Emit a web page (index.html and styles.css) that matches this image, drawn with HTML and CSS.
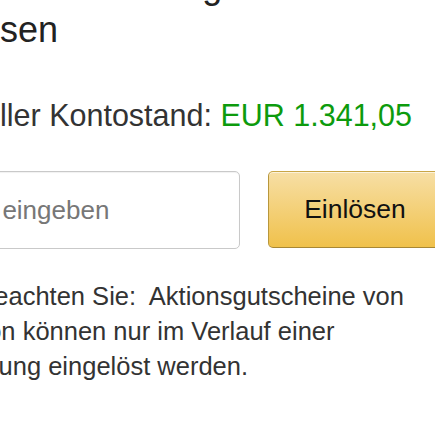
FILE: index.html
```html
<!DOCTYPE html>
<html lang="de">
<head>
    <meta charset="UTF-8">
    <meta name="viewport" content="width=device-width, initial-scale=1.0">
    <title>Gutschein einlösen</title>
    <link rel="stylesheet" href="styles.css">
</head>
<body>
    <div class="redeem-page">
        <h1 class="redeem-title">Neuen Geschenkgutschein einlösen</h1>

        <p class="balance">
            Aktueller Kontostand: <span class="balance-amount">EUR 1.341,05</span>
        </p>

        <form class="redeem-form">
            <input type="text" class="code-input" placeholder="Code eingeben">
            <button type="button" class="redeem-button">Einlösen</button>
        </form>

        <p class="redeem-note">
            Bitte beachten Sie:&nbsp; Aktionsgutscheine von Amazon können nur im Verlauf einer Bestellung eingelöst werden.
        </p>
    </div>
</body>
</html>
```

FILE: styles.css
```css
body {
    margin: 0;
    background-color: #ffffff;
    color: #333;
    font-family: "Liberation Sans", Arial, Helvetica, sans-serif;
    overflow: hidden;
}

/* page is scrolled a little to the right and down */
.redeem-page {
    width: 518px;
    margin-left: -76px;
    margin-top: -36px;
}

.redeem-title {
    font-size: 36px;
    line-height: 44px;
    font-weight: normal;
    color: #222;
    margin: 0;
}

.balance {
    font-size: 30.5px;
    line-height: 36px;
    margin: 45px 0 0 -2px;
    color: #333;
}

.balance-amount {
    color: #0d9b0d;
}

.redeem-form {
    display: flex;
    gap: 28px;
    margin-top: 38px;
}

.code-input {
    flex: 1;
    min-width: 0;
    height: 78px;
    box-sizing: border-box;
    border: 1px solid #c9c9c9;
    border-radius: 5px;
    padding: 0 8px;
    font-family: inherit;
    font-size: 26px;
    color: #333;
    background-color: #fff;
    box-shadow: inset 0 1px 1px rgba(0, 0, 0, 0.06);
}

.code-input::placeholder {
    color: #777;
}

.redeem-button {
    flex: none;
    width: 174px;
    height: 77px;
    box-sizing: border-box;
    border: 1px solid #b8973c;
    border-color: #c9a646 #b8973c #a88734;
    border-radius: 5px;
    background: linear-gradient(to bottom, #f7dfa5, #f0c14b);
    box-shadow: inset 0 1px 0 rgba(255, 255, 255, 0.6);
    font-family: inherit;
    font-size: 26.5px;
    color: #111;
    padding: 0;
    cursor: pointer;
}

.redeem-note {
    font-size: 25.5px;
    line-height: 35px;
    margin: 30px 0 0 -2px;
    color: #333;
}
```
